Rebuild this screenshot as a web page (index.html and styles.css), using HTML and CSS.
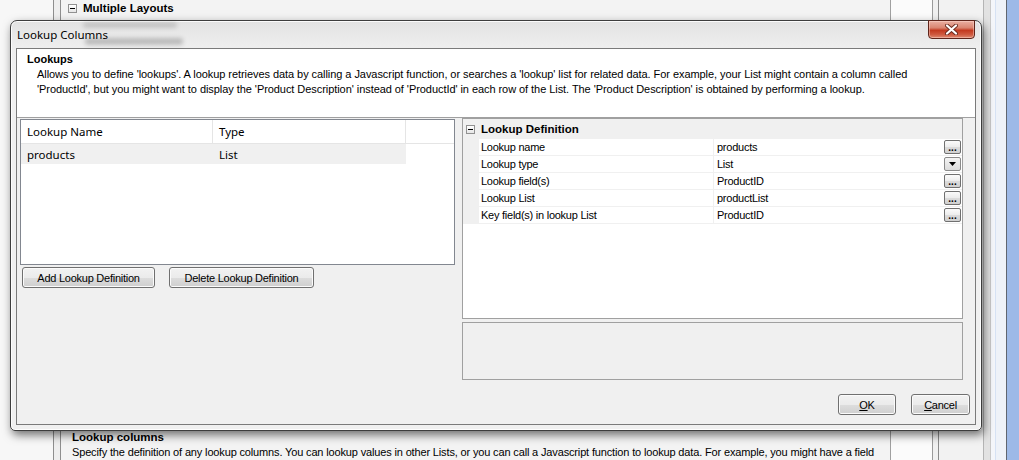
FILE: index.html
```html
<!DOCTYPE html>
<html lang="en">
<head>
  <meta charset="UTF-8">
  <title>Lookup Columns</title>
  <link rel="stylesheet" href="styles.css">
</head>
<body>
  <div class="desktop">
    <div class="gutter"></div>
    <div class="strip"></div>
    <div class="panel">
      <div class="panelTop"><span class="treeBox"></span>Multiple Layouts</div>
      <div class="panelBottom">
        <p class="sectionTitle">Lookup columns</p>
        <p class="sectionText">Specify the definition of any lookup columns. You can lookup values in other Lists, or you can call a Javascript function to lookup data. For example, you might have a field</p>
      </div>
    </div>
    <div class="sideA"></div>
    <div class="sideB"></div>
    <div class="sideC"></div>
    <div class="sideD"></div>
    <div class="sideE"></div>
    <div class="sideBlue"></div>
  </div>

  <div class="dialog">
    <span class="ghost ghostOne"></span>
    <span class="ghost ghostTwo"></span>
    <div class="titleBar">Lookup Columns</div>
    <button class="closeBtn" aria-label="Close">
      <svg width="13" height="11" viewBox="0 0 13 11">
        <path d="M2 1.5 L11 9.5 M11 1.5 L2 9.5" stroke="#6a2a1e" stroke-width="4" stroke-linecap="round"/>
        <path d="M2 1.5 L11 9.5 M11 1.5 L2 9.5" stroke="#ffffff" stroke-width="2.2" stroke-linecap="round"/>
      </svg>
    </button>

    <div class="client">
      <header class="infoPanel">
        <p class="infoTitle">Lookups</p>
        <p class="infoText">Allows you to define 'lookups'. A lookup retrieves data by calling a Javascript function, or searches a 'lookup' list for related data. For example, your List might contain a column called<br>'ProductId', but you might want to display the 'Product Description' instead of 'ProductId' in each row of the List. The 'Product Description' is obtained by performing a lookup.</p>
      </header>

      <section class="mainRow">
        <div class="leftCol">
          <div class="listView">
            <div class="listHead">
              <span class="colName">Lookup Name</span>
              <span class="colType">Type</span>
            </div>
            <div class="listRow">
              <span class="colName">products</span>
              <span class="colType">List</span>
            </div>
          </div>
          <div class="btnRow">
            <button class="winBtn addBtn">Add Lookup Definition</button>
            <button class="winBtn delBtn">Delete Lookup Definition</button>
          </div>
        </div>

        <div class="rightCol">
          <div class="propGrid">
            <div class="propCategory"><span class="treeBox"></span>Lookup Definition</div>
            <div class="propRow">
              <span class="propMargin"></span>
              <span class="propLabel">Lookup name</span>
              <span class="propValue">products<button class="ellipsisBtn">...</button></span>
            </div>
            <div class="propRow">
              <span class="propMargin"></span>
              <span class="propLabel">Lookup type</span>
              <span class="propValue">List<button class="dropBtn"><svg width="7" height="4" viewBox="0 0 7 4"><path d="M0 0 H7 L3.5 4 Z" fill="#000"/></svg></button></span>
            </div>
            <div class="propRow">
              <span class="propMargin"></span>
              <span class="propLabel">Lookup field(s)</span>
              <span class="propValue">ProductID<button class="ellipsisBtn">...</button></span>
            </div>
            <div class="propRow">
              <span class="propMargin"></span>
              <span class="propLabel">Lookup List</span>
              <span class="propValue">productList<button class="ellipsisBtn">...</button></span>
            </div>
            <div class="propRow">
              <span class="propMargin"></span>
              <span class="propLabel">Key field(s) in lookup List</span>
              <span class="propValue">ProductID<button class="ellipsisBtn">...</button></span>
            </div>
          </div>
          <div class="propHelp"></div>
        </div>
      </section>

      <footer class="dialogFooter">
        <button class="winBtn okBtn"><u>O</u>K</button>
        <button class="winBtn cancelBtn"><u>C</u>ancel</button>
      </footer>
    </div>
  </div>
</body>
</html>
```

FILE: styles.css
```css
* {
  box-sizing: border-box;
}

body {
  width: 1019px;
  height: 460px;
  margin: 0;
  overflow: hidden;
  position: relative;
  background-color: #ffffff;
  color: #000000;
  font-family: "Liberation Sans", Arial, sans-serif;
  font-size: 11px;
}

p {
  margin: 0;
}

/* window behind the dialog */
.desktop {
  display: flex;
  height: 460px;
}

.gutter {
  width: 54px;
  background-color: #f7f7f7;
  border-right: 1px solid #8e8e8e;
}

.strip {
  width: 7px;
  background-color: #eeeeee;
  border-right: 1px solid #8e8e8e;
}

.panel {
  width: 830px;
  background-color: #f3f3f3;
  border-right: 1px solid #a0a0a0;
  display: flex;
  flex-direction: column;
  justify-content: space-between;
}

.panelTop {
  display: flex;
  align-items: center;
  gap: 6px;
  height: 15px;
  padding: 1px 0 0 7px;
  font-weight: bold;
  font-size: 11.5px;
}

.panelBottom {
  padding-left: 11px;
  white-space: nowrap;
}

.sectionTitle {
  font-weight: bold;
  font-size: 11.5px;
  line-height: 15px;
}

.sectionText {
  line-height: 15px;
  letter-spacing: -0.15px;
}

.sideA {
  width: 42px;
  background-color: #fbfbfb;
  border-right: 1px solid #9a9a9a;
}

.sideB {
  width: 6px;
  background-color: #f0f0f0;
  border-right: 1px solid #8a8a8a;
}

.sideC {
  width: 45px;
  background-color: #f2f2f2;
  border-right: 1px solid #b4b4b4;
}

.sideD {
  width: 7px;
  background-color: #e2e2e2;
  border-right: 1px solid #c8c8c8;
}

.sideE {
  width: 16px;
  background: linear-gradient(to right, #f4f6fa 0, #f4f6fa 4px, #d6e2f4 4px, #d6e2f4 5px, #eef2f8 5px);
  border-right: 1px solid #5f6670;
}

.sideBlue {
  flex: 1;
  background-color: #9db9e7;
}

/* dialog window */
.dialog {
  position: absolute;
  left: 10px;
  top: 20px;
  width: 972px;
  height: 411px;
  padding: 0 5px 5px;
  border: 1px solid #3d3d3d;
  border-radius: 7px 7px 5px 5px;
  background: linear-gradient(to bottom, #e2e2e2 0, #eeeeee 26px, #f0f0f0 60px);
  box-shadow: inset 0 0 0 1px rgba(255, 255, 255, 0.85), 2px 4px 10px rgba(0, 0, 0, 0.55);
  display: flex;
  flex-direction: column;
}

/* blurred content seen through the glass frame */
.ghost {
  position: absolute;
  border-radius: 3px;
  background-color: rgba(0, 0, 0, 0.14);
  filter: blur(2px);
}

.ghostOne {
  left: 72px;
  top: 1px;
  width: 94px;
  height: 6px;
}

.ghostTwo {
  left: 74px;
  top: 17px;
  width: 98px;
  height: 7px;
  background-color: rgba(0, 0, 0, 0.2);
}

.titleBar {
  position: relative;
  height: 27px;
  display: flex;
  align-items: center;
  padding-left: 1px;
  font-family: "Noto Sans", "Liberation Sans", sans-serif;
  font-size: 11.5px;
}

.closeBtn {
  position: absolute;
  top: -1px;
  right: 6px;
  width: 47px;
  height: 19px;
  padding: 0;
  border: 1px solid #5e241a;
  border-radius: 0 0 4px 4px;
  background: linear-gradient(to bottom, #eab0a2 0%, #d98571 40%, #c3391f 55%, #cf5a40 80%, #df8a72 100%);
  box-shadow: inset 0 0 0 1px rgba(255, 220, 210, 0.45);
  display: flex;
  align-items: center;
  justify-content: center;
}

.client {
  height: 377px;
  border: 1px solid #7a7a7a;
  background-color: #f0f0f0;
  display: flex;
  flex-direction: column;
}

.infoPanel {
  height: 69px;
  padding: 2px 0 0 10px;
  background-color: #ffffff;
  border-bottom: 1px solid #a0a0a0;
  white-space: nowrap;
}

.infoTitle {
  font-weight: bold;
  line-height: 16px;
}

.infoText {
  margin-left: 10px;
  line-height: 15px;
  letter-spacing: -0.06px;
}

.mainRow {
  display: flex;
  gap: 7px;
  height: 262px;
  padding: 0 12px 0 3px;
}

.leftCol {
  width: 435px;
  padding-top: 1px;
}

.listView {
  height: 146px;
  border: 1px solid #828790;
  background-color: #ffffff;
  font-family: "Noto Sans", "Liberation Sans", sans-serif;
  font-size: 11.5px;
}

.listHead {
  display: flex;
  height: 24px;
  border-bottom: 1px solid #e5e5e5;
}

.listHead .colName, .listHead .colType {
  border-right: 1px solid #e5e5e5;
}

.listRow {
  display: flex;
  width: 385px;
  height: 20px;
  background-color: #f0f0f0;
}

.colName, .colType {
  width: 192px;
  display: flex;
  align-items: center;
  padding-left: 6px;
}

.colType {
  width: 193px;
}

.btnRow {
  display: flex;
  gap: 14px;
  margin-top: 2px;
  padding-left: 2px;
}

.winBtn {
  height: 21px;
  padding: 0;
  border: 1px solid #707070;
  border-radius: 3px;
  background: linear-gradient(to bottom, #f2f2f2 0%, #ebebeb 50%, #dddddd 51%, #cfcfcf 100%);
  box-shadow: inset 0 0 0 1px #fbfbfb;
  color: #000000;
  font-family: "Liberation Sans", Arial, sans-serif;
  font-size: 11px;
  letter-spacing: -0.25px;
}

.addBtn {
  width: 133px;
}

.delBtn {
  width: 145px;
}

.rightCol {
  width: 501px;
  display: flex;
  flex-direction: column;
  gap: 3px;
}

.propGrid {
  height: 201px;
  border: 1px solid #a0a0a0;
  background-color: #ffffff;
}

.propCategory {
  height: 20px;
  display: flex;
  align-items: center;
  gap: 6px;
  padding-left: 3px;
  background-color: #f0f0f0;
  font-weight: bold;
  font-size: 11.5px;
}

.treeBox {
  position: relative;
  width: 9px;
  height: 9px;
  border: 1px solid #919191;
  background: linear-gradient(to bottom, #ffffff, #e6e6e6);
}

.treeBox::after {
  content: "";
  position: absolute;
  left: 1px;
  top: 3px;
  width: 5px;
  height: 1px;
  background-color: #000000;
}

.propRow {
  display: flex;
  height: 17px;
  border-bottom: 1px solid #f0f0f0;
}

.propMargin {
  width: 16px;
  background-color: #f0f0f0;
}

.propLabel {
  width: 235px;
  display: flex;
  align-items: center;
  padding-left: 2px;
  border-right: 1px solid #f0f0f0;
  letter-spacing: -0.25px;
}

.propValue {
  flex: 1;
  display: flex;
  align-items: center;
  justify-content: space-between;
  padding: 0 1px 0 3px;
  letter-spacing: -0.25px;
}

.ellipsisBtn, .dropBtn {
  width: 17px;
  height: 14px;
  padding: 0;
  border: 1px solid #707070;
  border-radius: 2px;
  background: linear-gradient(to bottom, #fbfbfb 0%, #ececec 50%, #dcdcdc 51%, #d0d0d0 100%);
  display: flex;
  justify-content: center;
}

.ellipsisBtn {
  align-items: flex-end;
  font-family: "Liberation Sans", Arial, sans-serif;
  font-weight: bold;
  font-size: 10px;
  line-height: 10px;
  letter-spacing: 0;
}

.dropBtn {
  align-items: center;
  border-color: #8a8a8a;
  background: linear-gradient(to bottom, #f4f4f4, #dcdcdc);
}

.propHelp {
  height: 58px;
  border: 1px solid #a0a0a0;
  background-color: #f0f0f0;
}

.dialogFooter {
  display: flex;
  justify-content: flex-end;
  gap: 15px;
  padding: 14px 5px 0 0;
}

.okBtn {
  width: 58px;
}

.cancelBtn {
  width: 59px;
}
```
